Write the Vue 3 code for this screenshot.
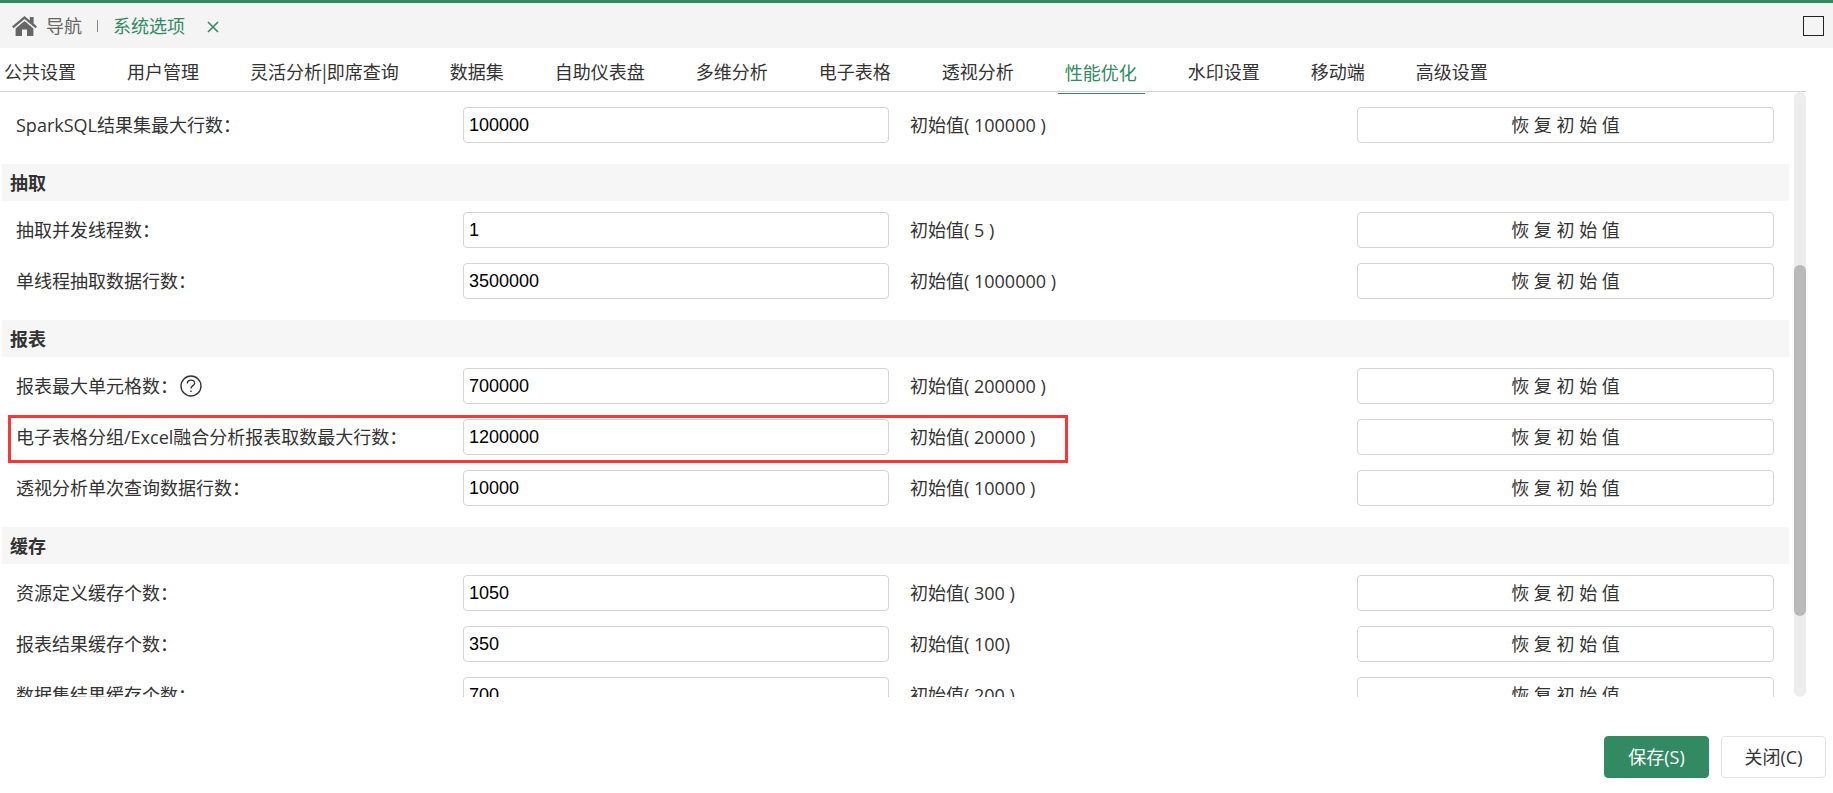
<template>
    <div class="page">
        <header class="title-bar">
            <a href="#" class="home-link">
                <svg class="home-icon" viewBox="0 0 25 20" aria-hidden="true">
                    <path d="M12.5 0 L0 10.4 L1.5 12.2 L12.5 3.1 L23.5 12.2 L25 10.4 L21.6 7.5 V1 H17.8 V4.4 Z" />
                    <path d="M12.5 5 L3.6 12.4 V20 H10 V13.4 H15 V20 H21.4 V12.4 Z" />
                </svg>
                导航
            </a>
            <span class="divider"></span>
            <a href="#" class="current-page">系统选项</a>
            <button type="button" class="close-tab" aria-label="关闭标签">
                <svg viewBox="0 0 12 12" aria-hidden="true">
                    <path d="M1 2 L11 12 M11 2 L1 12" />
                </svg>
            </button>
            <button type="button" class="maximize-btn" aria-label="最大化"></button>
        </header>

        <nav class="tabs">
            <a v-for="tab in tabs" :key="tab" href="#" class="tab" :class="{ active: tab === activeTab }" @click.prevent="activeTab = tab">{{ tab }}</a>
        </nav>

        <main class="panel">
            <div class="settings">
                <section v-for="group in groups" :key="group.title" class="group">
                    <h2 v-if="group.title" class="group-title">{{ group.title }}</h2>
                    <div class="rows">
                        <div v-for="item in group.items" :key="item.id" class="row" :class="{ marked: item.marked }">
                            <div class="label-cell">
                                <label :for="item.id">{{ item.label }}：</label>
                                <svg v-if="item.help" class="help-icon" viewBox="0 0 22 22" aria-hidden="true">
                                    <circle cx="11" cy="11" r="10" />
                                    <path d="M7.4 8.6 C7.4 6.4 9 5.1 11 5.1 C13.1 5.1 14.6 6.4 14.6 8.2 C14.6 10.6 11 10.8 11 13.6" />
                                    <path d="M11 15.4 V17" />
                                </svg>
                            </div>
                            <input :id="item.id" v-model="item.value" type="text" class="value-input" />
                            <span class="initial">初始值( {{ item.initial }})</span>
                            <button type="button" class="reset-btn" @click="reset(item)">恢 复 初 始 值</button>
                        </div>
                    </div>
                </section>
            </div>
            <div class="scroll-track">
                <div class="scroll-thumb"></div>
            </div>
        </main>

        <footer class="footer">
            <button type="button" class="btn btn-primary">保存(S)</button>
            <button type="button" class="btn">关闭(C)</button>
        </footer>
    </div>
</template>

<script setup>
import { reactive, ref } from 'vue';

const tabs = [
    '公共设置',
    '用户管理',
    '灵活分析|即席查询',
    '数据集',
    '自助仪表盘',
    '多维分析',
    '电子表格',
    '透视分析',
    '性能优化',
    '水印设置',
    '移动端',
    '高级设置'
];

const activeTab = ref('性能优化');

const groups = reactive([
    {
        title: '',
        items: [
            { id: 'spark-rows', label: 'SparkSQL结果集最大行数', value: '100000', initial: '100000 ' }
        ]
    },
    {
        title: '抽取',
        items: [
            { id: 'extract-threads', label: '抽取并发线程数', value: '1', initial: '5 ' },
            { id: 'extract-rows', label: '单线程抽取数据行数', value: '3500000', initial: '1000000 ' }
        ]
    },
    {
        title: '报表',
        items: [
            { id: 'report-cells', label: '报表最大单元格数', value: '700000', initial: '200000 ', help: true },
            { id: 'sheet-rows', label: '电子表格分组/Excel融合分析报表取数最大行数', value: '1200000', initial: '20000 ', marked: true },
            { id: 'pivot-rows', label: '透视分析单次查询数据行数', value: '10000', initial: '10000 ' }
        ]
    },
    {
        title: '缓存',
        items: [
            { id: 'resource-cache', label: '资源定义缓存个数', value: '1050', initial: '300 ' },
            { id: 'report-cache', label: '报表结果缓存个数', value: '350', initial: '100' },
            { id: 'dataset-cache', label: '数据集结果缓存个数', value: '700', initial: '200 ' }
        ]
    }
]);

function reset(item) {
    item.value = item.initial.trim();
}
</script>

<style>
body {
    margin: 0;
    background-color: #fff;
}
</style>

<style scoped>
.page {
    display: flex;
    flex-direction: column;
    height: 100vh;
    font-family: 'Open Sans', 'Noto Sans CJK SC', sans-serif;
    font-size: 18px;
    line-height: 24px;
    color: #333;
}

.page *,
.page *::after {
    box-sizing: border-box;
}

a {
    color: inherit;
    text-decoration: none;
}

button {
    padding: 0;
    font: inherit;
    color: inherit;
    background: none;
    border: none;
    cursor: pointer;
}

.title-bar {
    display: flex;
    flex: none;
    align-items: center;
    height: 48px;
    padding: 0 9px 0 12px;
    background-color: #f4f4f4;
    border-top: 3px solid #318a62;
}

.home-link {
    display: flex;
    align-items: center;
    gap: 9px;
    color: #666;
}

.home-icon {
    width: 25px;
    height: 20px;
    fill: #666;
}

.divider {
    width: 1px;
    height: 12px;
    margin: 0 15px;
    background-color: #888;
}

.current-page {
    color: #318a62;
}

.close-tab {
    display: flex;
    margin-left: 22px;
}

.close-tab svg {
    width: 12px;
    height: 12px;
    overflow: visible;
    fill: none;
    stroke: #318a62;
    stroke-width: 1.6;
}

.maximize-btn {
    width: 21px;
    height: 20px;
    margin-left: auto;
    border: 1px solid #222;
}

.tabs {
    display: flex;
    flex: none;
    gap: 51px;
    height: 44px;
    margin-right: 27px;
    padding-left: 4px;
    border-bottom: 1px solid #d4d4d4;
    font-family: 'Noto Sans CJK SC', sans-serif;
    line-height: 46px;
    white-space: nowrap;
}

.tab.active {
    position: relative;
    color: #318a62;
    line-height: 48px;
}

.tab.active::after {
    content: '';
    position: absolute;
    left: -7px;
    right: -8px;
    top: 45px;
    height: 1px;
    background-color: #318a62;
}

.panel {
    display: flex;
    flex: 1;
    gap: 5px;
    min-height: 0;
    margin-right: 27px;
    padding-left: 2px;
    overflow: hidden;
}

.settings {
    flex: 1;
    padding-top: 4px;
}

.group-title {
    height: 37px;
    margin: 0;
    padding-left: 8px;
    background-color: #f6f6f6;
    font-size: 18px;
    font-weight: 700;
    line-height: 38px;
}

.rows {
    display: grid;
    gap: 15px;
    padding: 11px 15px 21px 14px;
}

.row {
    position: relative;
    display: grid;
    grid-template-columns: 426fr 426fr 426fr 417fr;
    gap: 21px;
    align-items: center;
    height: 36px;
}

/* red frame round the label, the input and the initial value */
.row.marked::after {
    content: '';
    position: absolute;
    top: -4px;
    bottom: -8px;
    left: -8px;
    width: calc(60% + 5px);
    border: 3px solid #fc3636;
    pointer-events: none;
}

.label-cell {
    display: flex;
    align-items: center;
    gap: 2px;
    white-space: nowrap;
}

.help-icon {
    width: 22px;
    height: 22px;
    fill: none;
    stroke: #333;
    stroke-width: 1.4;
}

.value-input {
    width: 100%;
    height: 36px;
    padding: 0 5px;
    border: 1px solid #d4d4d4;
    border-radius: 4px;
    outline: none;
    background-color: #fff;
    font-family: 'Liberation Sans', sans-serif;
    font-size: 18px;
    color: #000;
}

.value-input:focus {
    border-color: #318a62;
}

.initial {
    white-space: nowrap;
}

.reset-btn {
    height: 36px;
    border: 1px solid #d4d4d4;
    border-radius: 4px;
}

.scroll-track {
    flex: none;
    width: 12px;
    height: 100%;
    background-color: #ededed;
    border-radius: 6px;
}

.scroll-thumb {
    height: 58%;
    margin-top: 173px;
    background-color: #bababa;
    border-radius: 6px;
}

.footer {
    display: flex;
    flex: none;
    justify-content: flex-end;
    gap: 12px;
    padding: 39px 7px 15px;
}

.btn {
    min-width: 105px;
    height: 42px;
    padding: 0 22px;
    border: 1px solid #e2e2e2;
    border-radius: 4px;
}

.btn-primary {
    background-color: #318a62;
    border-color: #318a62;
    color: #fff;
}
</style>
